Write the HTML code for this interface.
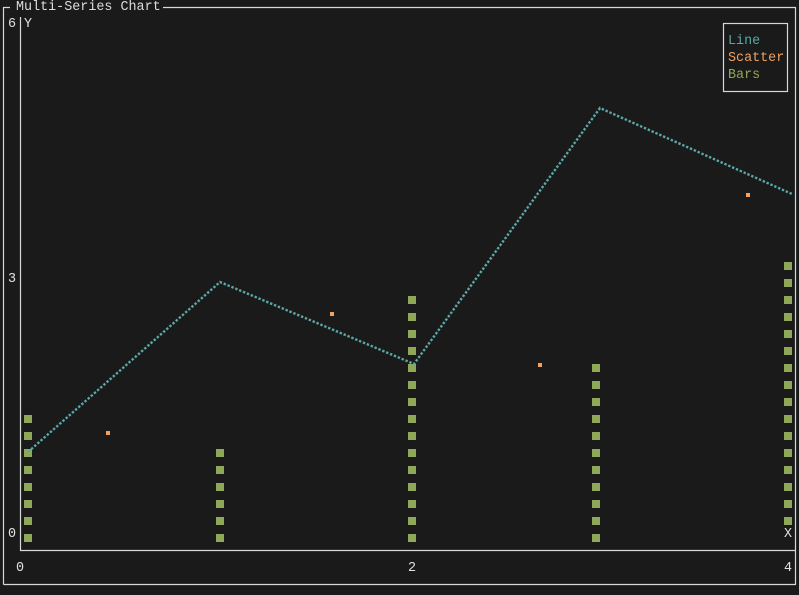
<!DOCTYPE html>
<html><head><style>
html,body{margin:0;padding:0;background:#1a1a1a;}
body{width:799px;height:595px;overflow:hidden;position:relative;font-family:"Liberation Mono","DejaVu Sans Mono",monospace;font-size:13.4px;}
.t{position:absolute;line-height:17px;white-space:pre;color:#e0e0e0;}
</style></head><body>
<svg width="799" height="595" style="position:absolute;left:0;top:0">
<g stroke="#d8d8d8" stroke-width="1.2" fill="none">
<path d="M3.5 584.5 V7.5 H10 M163 7.5 H795.5 V584.5 H3.5"/>
<path d="M20.5 17 V550.5 H796"/>
<rect x="723.5" y="23.5" width="64" height="68"/>
</g>
<g fill="#8fa857">
<rect x="24" y="415" width="8" height="8"/><rect x="24" y="432" width="8" height="8"/><rect x="24" y="449" width="8" height="8"/><rect x="24" y="466" width="8" height="8"/><rect x="24" y="483" width="8" height="8"/><rect x="24" y="500" width="8" height="8"/><rect x="24" y="517" width="8" height="8"/><rect x="24" y="534" width="8" height="8"/>
<rect x="216" y="449" width="8" height="8"/><rect x="216" y="466" width="8" height="8"/><rect x="216" y="483" width="8" height="8"/><rect x="216" y="500" width="8" height="8"/><rect x="216" y="517" width="8" height="8"/><rect x="216" y="534" width="8" height="8"/>
<rect x="408" y="296" width="8" height="8"/><rect x="408" y="313" width="8" height="8"/><rect x="408" y="330" width="8" height="8"/><rect x="408" y="347" width="8" height="8"/><rect x="408" y="364" width="8" height="8"/><rect x="408" y="381" width="8" height="8"/><rect x="408" y="398" width="8" height="8"/><rect x="408" y="415" width="8" height="8"/><rect x="408" y="432" width="8" height="8"/><rect x="408" y="449" width="8" height="8"/><rect x="408" y="466" width="8" height="8"/><rect x="408" y="483" width="8" height="8"/><rect x="408" y="500" width="8" height="8"/><rect x="408" y="517" width="8" height="8"/><rect x="408" y="534" width="8" height="8"/>
<rect x="592" y="364" width="8" height="8"/><rect x="592" y="381" width="8" height="8"/><rect x="592" y="398" width="8" height="8"/><rect x="592" y="415" width="8" height="8"/><rect x="592" y="432" width="8" height="8"/><rect x="592" y="449" width="8" height="8"/><rect x="592" y="466" width="8" height="8"/><rect x="592" y="483" width="8" height="8"/><rect x="592" y="500" width="8" height="8"/><rect x="592" y="517" width="8" height="8"/><rect x="592" y="534" width="8" height="8"/>
<rect x="784" y="262" width="8" height="8"/><rect x="784" y="279" width="8" height="8"/><rect x="784" y="296" width="8" height="8"/><rect x="784" y="313" width="8" height="8"/><rect x="784" y="330" width="8" height="8"/><rect x="784" y="347" width="8" height="8"/><rect x="784" y="364" width="8" height="8"/><rect x="784" y="381" width="8" height="8"/><rect x="784" y="398" width="8" height="8"/><rect x="784" y="415" width="8" height="8"/><rect x="784" y="432" width="8" height="8"/><rect x="784" y="449" width="8" height="8"/><rect x="784" y="466" width="8" height="8"/><rect x="784" y="483" width="8" height="8"/><rect x="784" y="500" width="8" height="8"/><rect x="784" y="517" width="8" height="8"/>
</g>
<polyline points="28,452 220,282 414,364 600,108 792,194" fill="none" stroke="#5aa8a8" stroke-width="2.4" stroke-dasharray="2.4 1.8"/>
<g fill="#f0a060">
<rect x="106" y="431" width="4" height="4"/><rect x="330" y="312" width="4" height="4"/><rect x="538" y="363" width="4" height="4"/><rect x="746" y="193" width="4" height="4"/>
</g>
</svg>
<div class="t" style="left:16px;top:-1px;color:#dcdcdc">Multi-Series Chart</div>
<div class="t" style="left:8px;top:16px">6</div>
<div class="t" style="left:24px;top:16px">Y</div>
<div class="t" style="left:8px;top:271px">3</div>
<div class="t" style="left:8px;top:526px">0</div>
<div class="t" style="left:784px;top:526px">X</div>
<div class="t" style="left:16px;top:560px">0</div>
<div class="t" style="left:408px;top:560px">2</div>
<div class="t" style="left:784px;top:560px">4</div>
<div class="t" style="left:728px;top:33px;color:#5aa8a0">Line</div>
<div class="t" style="left:728px;top:50px;color:#f0a060">Scatter</div>
<div class="t" style="left:728px;top:67px;color:#8fa857">Bars</div>
</body></html>
